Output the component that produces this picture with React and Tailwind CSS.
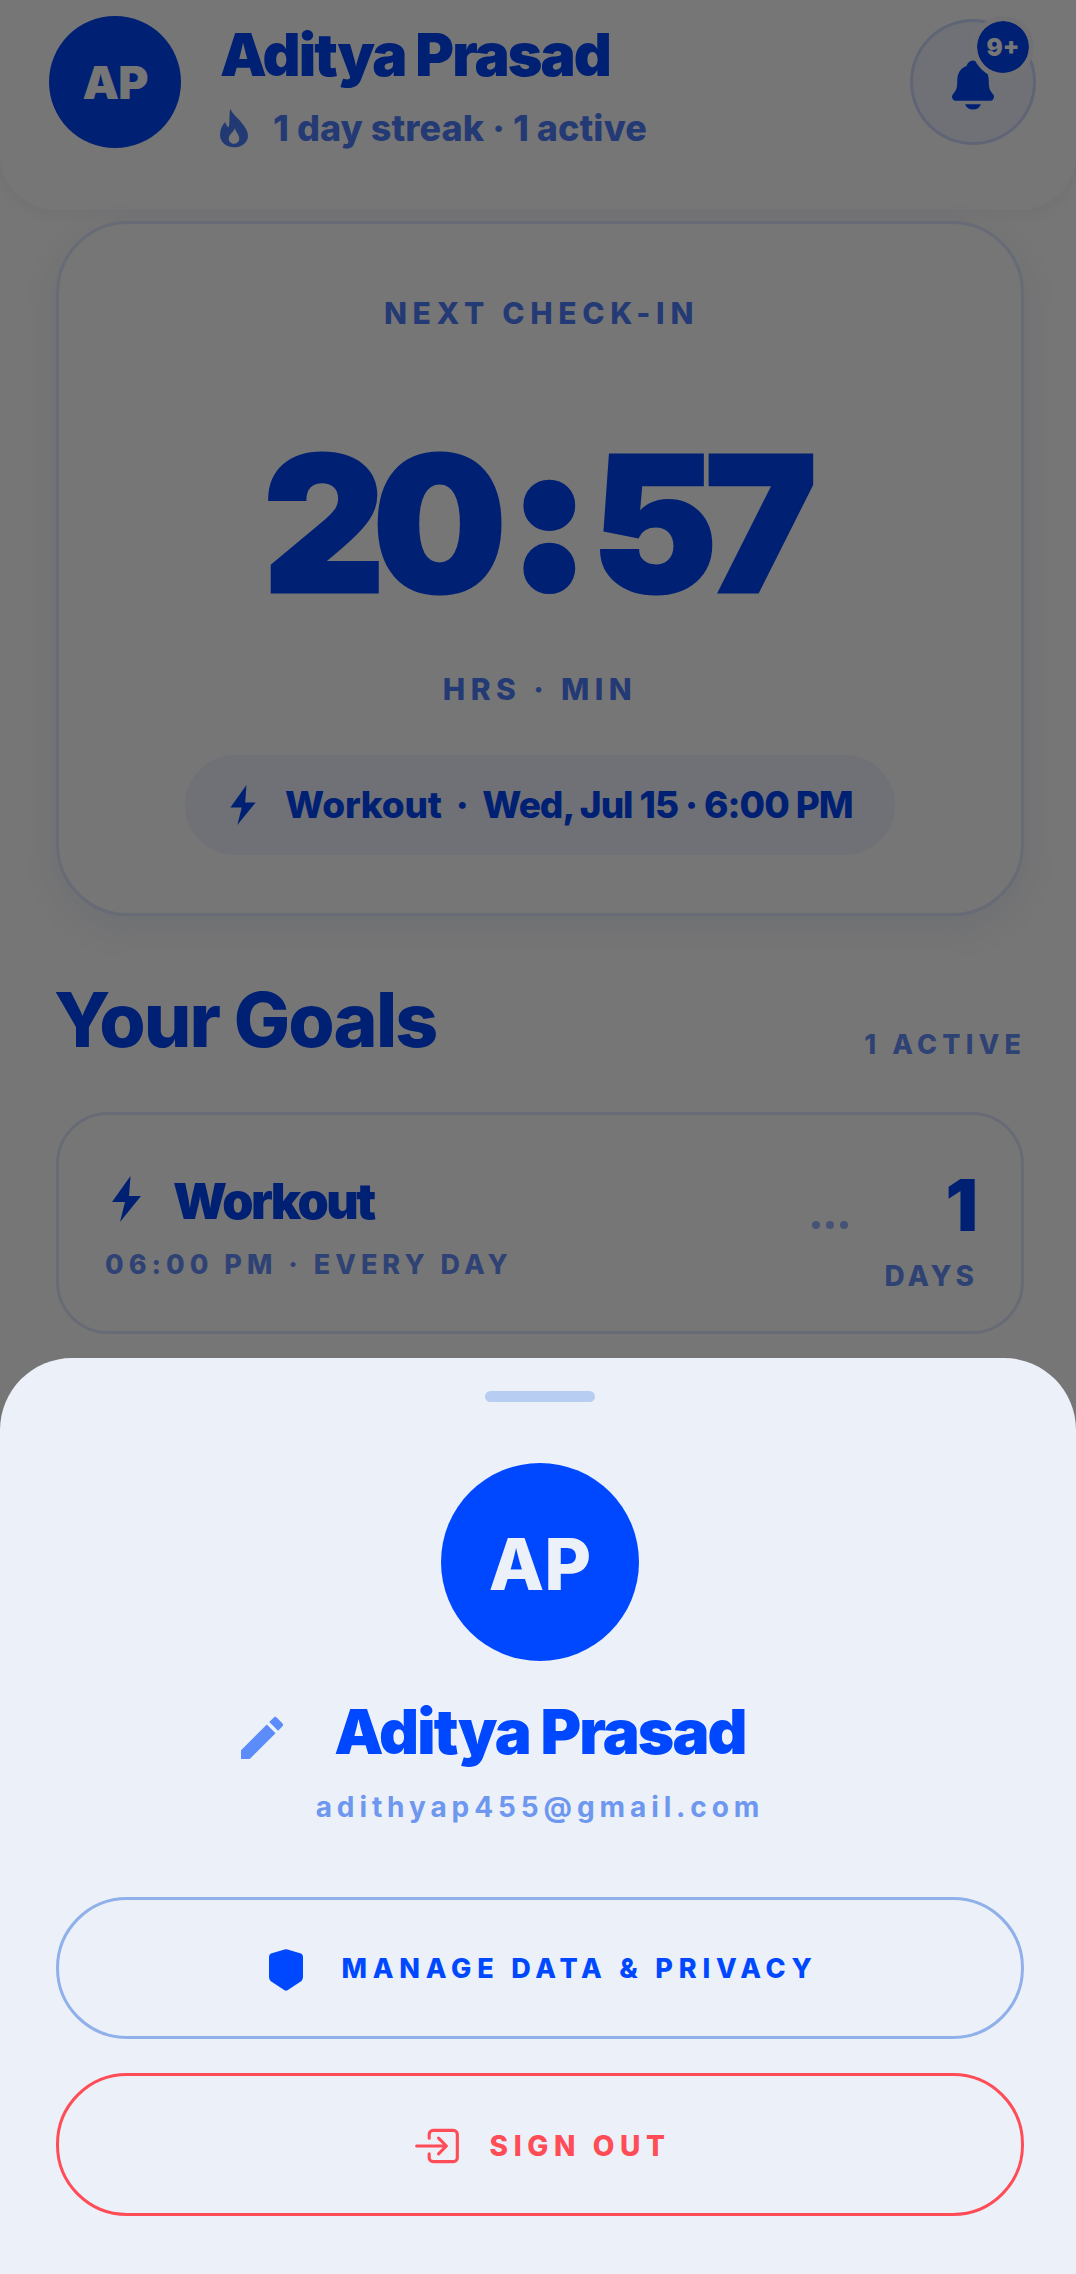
import { IoEnterOutline, IoNotifications } from 'react-icons/io5';
import { MdEdit } from 'react-icons/md';

const FlameIcon = ({ className }) => (
  <svg viewBox="0 0 24 24" fill="currentColor" className={className}>
    <path
      fillRule="evenodd"
      d="M10 1c1 3 4 5 6 7.5 2.5 3 4 5.5 4 8C20 20 16.5 23 12 23S4 20 4 16c0-3 1-5.5 3-7.5.3 1.5 1 2.5 2 3C9.8 8 9 4 10 1ZM12.5 12c-.3 2-3.5 3.5-3.5 6 0 1.8 1.3 3 3 3s3-1.2 3-3c0-2.3-2-3.5-2.5-6Z"
    />
  </svg>
);

const ShieldIcon = ({ className }) => (
  <svg viewBox="0 0 34 42" fill="currentColor" className={className}>
    <path d="M15.5.5Q17 0 18.5.5L32 4.5Q34 5.2 34 8V28Q34 30 32.5 32L18.5 41.3Q17 42.2 15.5 41.3L1.5 32Q0 30 0 28V8Q0 5.2 2 4.5Z" />
  </svg>
);

const BoltIcon = ({ className }) => (
  <svg viewBox="0 0 29 46" fill="currentColor" className={className}>
    <path d="M18.5 0 0 26H13L8 46 29 20H17Z" />
  </svg>
);

const Header = () => {
  return (
    <header className="h-[210px] rounded-b-[56px] bg-[#ececec] shadow-[0_4px_16px_rgba(0,40,120,0.05)] pl-[49px] pr-[40px] pt-[16px] flex items-start">
      <div className="w-[132px] h-[132px] rounded-full bg-[#0040e8] flex items-center justify-center text-[#ececec] text-[46px] font-black tracking-[-0.02em]">
        AP
      </div>
      <div className="ml-[39px] flex-1">
        <div className="text-[59px] leading-[64px] mt-[7px] font-black text-[#0040e8] tracking-[-0.032em]">Aditya Prasad</div>
        <div className="mt-[20px] flex items-center text-[#0040e8]/70 text-[36px] leading-[40px] font-extrabold tracking-[0.002em]">
          <FlameIcon className="w-[42px] h-[42px] mr-[18px] -ml-[7px]" />
          1 day streak · 1 active
        </div>
      </div>
      <div className="relative mt-[3px] w-[126px] h-[126px] rounded-full border-[3px] border-[#0040e8]/15 bg-[#0040e8]/5 flex items-center justify-center">
        <IoNotifications className="w-[56px] h-[56px] text-[#0040e8] mt-[6px]" />
        <div className="absolute -top-[6px] -right-[1px] w-[62px] h-[62px] pt-[2px] rounded-full bg-[#0040e8] border-[5px] border-[#e4e5e8] flex items-center justify-center text-[#ececec] text-[24px] font-black bg-clip-padding">
          9+
        </div>
      </div>
    </header>
  );
};

const CheckinCard = () => {
  return (
    <section className="ml-[56px] mr-[52px] mt-[11px] h-[695px] rounded-[72px] border-[3px] border-[#0040e8]/12 shadow-[0_12px_40px_rgba(0,50,160,0.07)] flex flex-col items-center">
      <div className="mt-[74px] pl-[3px] text-[30px] leading-[30px] font-extrabold tracking-[0.19em] text-[#0040e8]/70">NEXT CHECK-IN</div>
      <div className="mt-[96px] mr-[12px] flex items-center text-[#0040e8] text-[188px] leading-[200px] font-black tracking-[-0.065em] [-webkit-text-stroke:3px_#0040e8]">
        <span>20</span>
        <span className="mx-[20px] -mt-[14px] [-webkit-text-stroke:14px_#0040e8]">:</span>
        <span>57</span>
      </div>
      <div className="mt-[50px] text-[30px] leading-[30px] font-extrabold tracking-[0.18em] text-[#0040e8]/70">HRS · MIN</div>
      <div className="mt-[51px] w-[710px] h-[100px] rounded-full bg-[#0040e8]/6 flex items-center pl-[45px] text-[#0040e8] text-[37px] font-extrabold tracking-[-0.012em] whitespace-nowrap">
        <BoltIcon className="w-[26px] h-[40px] mr-[29px]" />
        <span className="tracking-[-0.005em]">Workout</span>
        <span className="mx-[14px]">·</span>
        <span className="tracking-[-0.028em]">Wed, Jul 15 · 6:00 PM</span>
      </div>
    </section>
  );
};

const GoalCard = () => {
  return (
    <section className="ml-[56px] mr-[52px] mt-[50px] h-[222px] rounded-[52px] border-[3px] border-[#0040e8]/12 pl-[46px] pr-[43px] flex justify-between">
      <div>
        <div className="mt-[56px] flex items-center text-[#0040e8] text-[50px] leading-[60px] font-black tracking-[-0.05em]">
          <BoltIcon className="w-[29px] h-[46px] mr-[32px] ml-[7px] -mt-[4px]" />
          Workout
        </div>
        <div className="mt-[19px] text-[27px] leading-[30px] font-extrabold tracking-[0.185em] text-[#0040e8]/60">06:00 PM · EVERY DAY</div>
      </div>
      <div className="flex items-start">
        <div className="mt-[106px] mr-[97px] flex gap-[6px]">
          <span className="w-[8px] h-[8px] rounded-full bg-[#0040e8]/40"></span>
          <span className="w-[8px] h-[8px] rounded-full bg-[#0040e8]/40"></span>
          <span className="w-[8px] h-[8px] rounded-full bg-[#0040e8]/40"></span>
        </div>
        <div className="flex flex-col items-end -ml-[60px]">
          <div className="mt-[50px] text-[72px] leading-[80px] font-black text-[#0040e8]">1</div>
          <div className="mt-[16px] text-[28px] leading-[30px] font-extrabold tracking-[0.14em] text-[#0040e8]/60">DAYS</div>
        </div>
      </div>
    </section>
  );
};

const ProfileSheet = () => {
  return (
    <div className="absolute left-0 right-0 bottom-0 h-[916px] rounded-t-[72px] bg-[#ecf0f8] pl-[56px] pr-[52px] flex flex-col items-center">
      <div className="mt-[33px] w-[110px] h-[11px] rounded-full bg-[#b8cdf2]"></div>
      <div className="mt-[61px] w-[198px] h-[198px] pt-[3px] rounded-full bg-[#0048ff] flex items-center justify-center text-[#ecf0f8] text-[72px] font-extrabold">
        AP
      </div>
      <div className="relative mt-[35px] text-[62px] leading-[72px] font-black text-[#0048ff] tracking-[-0.03em]">
        Aditya Prasad
        <MdEdit className="absolute -left-[100px] top-[14px] w-[56px] h-[56px] text-[#5b8cfa]" />
      </div>
      <div className="mt-[23px] text-[28px] leading-[32px] font-bold tracking-[0.175em] text-[#6e97f0]">adithyap455@gmail.com</div>
      <button className="mt-[74px] w-full h-[142px] pl-[7px] pt-[3px] rounded-[71px] border-[3px] border-[#8fb0ea] flex items-center justify-center text-[#0048ff] text-[27px] font-extrabold tracking-[0.215em]">
        <ShieldIcon className="w-[34px] h-[42px] mr-[38px]" />
        MANAGE DATA &amp; PRIVACY
      </button>
      <button className="mt-[34px] w-full h-[143px] pl-[2px] pt-[2px] rounded-[71px] border-[3px] border-[#ff4d57] flex items-center justify-center text-[#ff4d57] text-[28px] font-extrabold tracking-[0.2em]">
        <IoEnterOutline className="w-[50px] h-[50px] mr-[28px]" />
        SIGN OUT
      </button>
    </div>
  );
};

export default function App() {
  return (
    <div className="relative w-[1076px] h-[2274px] overflow-hidden bg-[#ececec] [font-family:Inter,sans-serif]">
      <Header />
      <CheckinCard />
      <div className="ml-[54px] mr-[50px] mt-[62px] flex justify-between items-end">
        <h2 className="text-[75px] leading-[84px] font-extrabold text-[#0040e8] tracking-[-0.025em]">Your Goals</h2>
        <div className="mb-[2px] text-[27px] leading-[30px] font-extrabold tracking-[0.19em] text-[#0040e8]/60">1 ACTIVE</div>
      </div>
      <GoalCard />
      <div className="absolute inset-0 bg-black/50"></div>
      <ProfileSheet />
    </div>
  );
}
